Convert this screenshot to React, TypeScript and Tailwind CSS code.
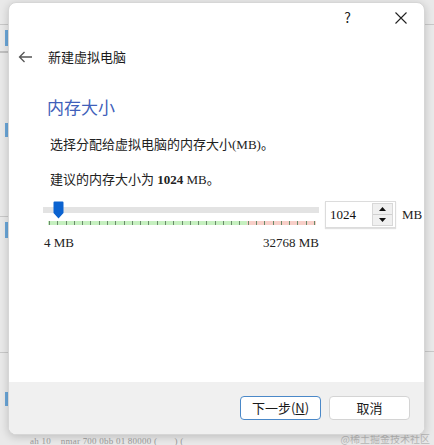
import React from 'react';

const sans = { fontFamily: '"Noto Sans CJK SC", "Noto Sans", sans-serif' };
const song = { fontFamily: '"Liberation Serif", "Noto Sans CJK SC", serif' };

const ticks = Array.from({ length: 33 }, (_, i) => i);

const Slider: React.FC = () => (
  <div className="w-[276px] shrink-0">
    <div className="relative h-[26px]">
      <div className="absolute left-0 right-0 top-[6px] h-[6px] bg-[#e3e3e3]" />
      <svg className="absolute left-[10px] top-0" width="11" height="18" viewBox="0 0 11 18">
        <path d="M1.5 0.5h8a1 1 0 0 1 1 1v10.5l-5 5.5l-5-5.5v-10.5a1 1 0 0 1 1-1z" fill="#0a62d0" />
      </svg>
      <div className="absolute left-[5px] right-[3px] top-[20px] h-[4px] flex">
        <div className="h-full w-[199px] bg-[#c6f0c0]" />
        <div className="h-full flex-1 bg-[#f8cfc8]" />
      </div>
      <div className="absolute left-[6px] right-[4px] top-[20px] h-[4px] flex justify-between">
        {ticks.map((t) => (
          <div key={t} className="w-px h-full bg-[#6a8a6a]" />
        ))}
      </div>
    </div>
    <div className="flex justify-between text-[13px] text-[#222] mt-[6px] pl-[1px]" style={song}>
      <span>4 MB</span>
      <span>32768 MB</span>
    </div>
  </div>
);

const SpinBox: React.FC = () => (
  <div className="flex items-start gap-[6px] shrink-0">
    <div className="w-[71px] h-[27px] bg-white border border-[#dcdcdc] shadow-[0_1px_1px_rgba(0,0,0,0.12)] flex items-center pl-[4px] pr-[2px]">
      <span className="flex-1 text-[13px] text-[#111]" style={song}>1024</span>
      <div className="flex flex-col w-[21px] h-[23px] bg-[#f0f0f0] border border-[#d8d8d8]">
        <div className="flex-1 flex items-center justify-center border-b border-[#d0d0d0]">
          <svg width="7" height="4" viewBox="0 0 7 4"><path d="M0 4h7L3.5 0z" fill="#111" /></svg>
        </div>
        <div className="flex-1 flex items-center justify-center">
          <svg width="7" height="4" viewBox="0 0 7 4"><path d="M0 0h7L3.5 4z" fill="#111" /></svg>
        </div>
      </div>
    </div>
    <span className="text-[13px] text-[#222] leading-[27px]" style={song}>MB</span>
  </div>
);

export default function App() {
  return (
    <div className="w-[434px] h-[445px] bg-[#e9e9e9] overflow-hidden relative">
      {/* blurred desktop bits behind the dialog */}
      <div className="absolute left-0 top-[24px] w-[8px] h-px bg-[#c8c8c8]" />
      <div className="absolute left-0 top-[51px] w-[8px] h-[2px] bg-[#c0c0c0]" />
      <div className="absolute left-[5px] top-[30px] w-[3px] h-[16px] bg-[#6aa6d8]" />
      <div className="absolute left-[5px] top-[123px] w-[3px] h-[14px] bg-[#6aa6d8]" />
      <div className="absolute left-0 top-[216px] w-[8px] h-px bg-[#c8c8c8]" />
      <div className="absolute left-[5px] top-[222px] w-[3px] h-[16px] bg-[#6aa6d8]" />
      <div className="absolute left-0 top-[352px] w-[8px] h-px bg-[#c8c8c8]" />
      <div className="absolute left-[5px] top-[392px] w-[3px] h-[14px] bg-[#6aa6d8]" />
      <div className="absolute right-0 top-[24px] w-[9px] h-px bg-[#c8c8c8]" />
      <div className="absolute right-0 top-[351px] w-[9px] h-px bg-[#c8c8c8]" />
      <div className="absolute left-[30px] top-[437px] text-[9px] leading-none text-[#9a9a9a] tracking-wide" style={song}>
        ah 10 &nbsp;&nbsp; nmar 700 0bb 01 80000 (&nbsp;&nbsp;&nbsp;&nbsp;&nbsp;&nbsp;&nbsp;) (
      </div>
      <div className="absolute right-[4px] top-[434px] text-[10px] leading-none text-[#b8b8b8]" style={sans}>
        @稀土掘金技术社区
      </div>

      <div className="pt-[2px] pl-[8px]">
        <div className="relative w-[417px] h-[433px] rounded-[8px] bg-white border border-[#d6d6d6] shadow-[0_2px_8px_rgba(0,0,0,0.18)] flex flex-col overflow-hidden">
          <div className="flex justify-end items-start h-[40px] pt-[4px] pr-[17px] gap-[44px] text-[#222]">
            <span className="text-[14px] leading-[20px]" style={sans}>?</span>
            <svg width="12" height="12" viewBox="0 0 12 12" className="mt-[5px]">
              <path d="M0.5 0.5l11 11M11.5 0.5l-11 11" stroke="#222" strokeWidth="1.1" />
            </svg>
          </div>

          <div className="flex items-center h-[26px] mt-[1px] pl-[9px]">
            <svg width="15" height="12" viewBox="0 0 15 12">
              <path d="M14 6H1.5M6.5 1L1.5 6l5 5" stroke="#555" strokeWidth="1.3" fill="none" />
            </svg>
            <span className="ml-[15px] text-[13px] text-[#1a1a1a]" style={sans}>新建虚拟电脑</span>
          </div>

          <div className="flex-1 pl-[34px] pr-[4px]">
            <div className="mt-[25px] ml-[4px] text-[17px] text-[#3f5fba] leading-[24px]" style={sans}>内存大小</div>
            <div className="mt-[17px] ml-[7px] text-[13px] text-[#222] leading-[18px]" style={song}>
              选择分配给虚拟电脑的内存大小(MB)。
            </div>
            <div className="mt-[17px] ml-[7px] text-[13px] text-[#222] leading-[18px]" style={song}>
              建议的内存大小为 <b className="font-bold">1024</b> MB。
            </div>
            <div className="flex gap-[6px] mt-[12px]">
              <Slider />
              <SpinBox />
            </div>
          </div>

          <div className="h-[52px] bg-[#f0f0f0] flex justify-end items-start pt-[14px] pr-[14px] gap-[8px]">
            <button className="w-[81px] h-[24px] rounded-[4px] bg-white border border-[#4a88c8] text-[13px] text-[#1a1a1a]" style={sans}>
              下一步(<span className="underline">N</span>)
            </button>
            <button className="w-[81px] h-[24px] rounded-[4px] bg-white border border-[#d4d4d4] text-[13px] text-[#1a1a1a]" style={sans}>
              取消
            </button>
          </div>
        </div>
      </div>
    </div>
  );
}
